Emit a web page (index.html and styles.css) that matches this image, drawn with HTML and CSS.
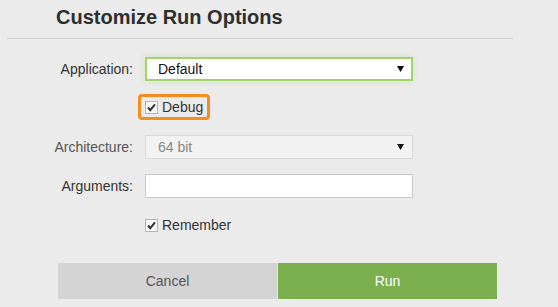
FILE: index.html
```html
<!DOCTYPE html>
<html>
<head>
<meta charset="utf-8">
<link rel="stylesheet" href="styles.css">
</head>
<body>
<div class="dialog">
  <div class="header"><h1 class="title">Customize Run Options</h1></div>
  <div class="form">
    <div class="row row-app">
      <label class="label">Application:</label>
      <div class="select select-active"><span>Default</span><svg class="arrow" width="7" height="6" viewBox="0 0 7 6"><path d="M0 0H7L3.5 6Z" fill="#111"/></svg></div>
    </div>
    <div class="row row-debug">
      <span class="label"></span>
      <div class="focus-box"><span class="check"><svg width="11" height="11" viewBox="0 0 11 11"><path d="M2 5.5L4.3 8.2L9 2.3" fill="none" stroke="#333" stroke-width="2"/></svg></span><span class="check-text">Debug</span></div>
    </div>
    <div class="row row-arch">
      <label class="label label-muted">Architecture:</label>
      <div class="select select-disabled"><span>64 bit</span><svg class="arrow" width="7" height="6" viewBox="0 0 7 6"><path d="M0 0H7L3.5 6Z" fill="#111"/></svg></div>
    </div>
    <div class="row row-args">
      <label class="label">Arguments:</label>
      <div class="input"></div>
    </div>
    <div class="row row-remember">
      <span class="label"></span>
      <div class="plain-check"><span class="check"><svg width="11" height="11" viewBox="0 0 11 11"><path d="M2 5.5L4.3 8.2L9 2.3" fill="none" stroke="#333" stroke-width="2"/></svg></span><span class="check-text">Remember</span></div>
    </div>
  </div>
  <div class="buttons">
    <div class="btn btn-cancel">Cancel</div>
    <div class="btn btn-run">Run</div>
  </div>
</div>
</body>
</html>
```
FILE: styles.css
```css
html, body {
  margin: 0;
  padding: 0;
  background: #ebebeb;
  font-family: "Liberation Sans", Arial, sans-serif;
  color: #333;
}
.dialog {
  width: 558px;
  height: 307px;
  overflow: hidden;
}
.header {
  margin-left: 7px;
  width: 506px;
  padding-top: 5px;
  padding-bottom: 9px;
  border-bottom: 1px solid #cfcfcf;
}
.title {
  margin: 0;
  padding-left: 49px;
  font-size: 20px;
  line-height: 24px;
  font-weight: bold;
  color: #2e2e2e;
}
.form {
  display: flex;
  flex-direction: column;
  padding-top: 18px;
}
.row {
  display: flex;
  align-items: center;
}
.label {
  width: 133px;
  text-align: right;
  font-size: 14px;
  color: #333;
  margin-right: 12px;
  flex: none;
}
.label-muted { color: #555; }
.select {
  box-sizing: border-box;
  width: 268px;
  height: 24px;
  display: flex;
  align-items: center;
  justify-content: space-between;
  font-size: 14px;
  padding: 0 7px 0 12px;
}
.select-active {
  background: #fff;
  border: 2px solid #a0d468;
  box-shadow: 0 0 6px rgba(160, 212, 104, 0.35);
  color: #111;
  padding-left: 11px;
}
.select-disabled {
  background: #f2f2f2;
  border: 1px solid #dadada;
  color: #888;
  padding-right: 8px;
}
.row-debug { margin-top: 13px; }
.focus-box {
  margin-left: -7px;
  box-sizing: border-box;
  width: 72px;
  height: 26px;
  border: 3px solid #f68b1f;
  border-radius: 4px;
  display: flex;
  align-items: center;
  padding-left: 4px;
}
.check {
  box-sizing: border-box;
  width: 13px;
  height: 13px;
  border: 1px solid #b5b5b5;
  background: #f7f7f7;
  display: inline-flex;
  align-items: center;
  justify-content: center;
  flex: none;
}
.check-text {
  font-size: 14px;
  color: #333;
  margin-left: 4px;
}
.row-arch { margin-top: 15px; }
.row-args { margin-top: 15px; }
.input {
  box-sizing: border-box;
  width: 268px;
  height: 24px;
  background: #fff;
  border: 1px solid #c9c9c9;
}
.row-remember { margin-top: 19px; }
.plain-check {
  display: flex;
  align-items: center;
}
.buttons {
  display: flex;
  gap: 1px;
  margin-top: 30px;
  margin-left: 58px;
  width: 439px;
}
.btn {
  flex: 1;
  height: 36px;
  display: flex;
  align-items: center;
  justify-content: center;
  font-size: 14px;
}
.btn-cancel {
  background: #d4d4d4;
  color: #555;
}
.btn-run {
  background: #7cb04e;
  color: #fff;
}
```
